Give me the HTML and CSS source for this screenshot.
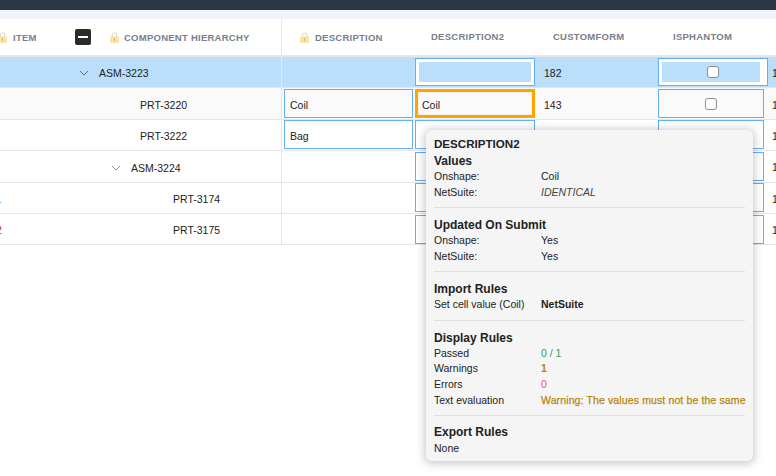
FILE: index.html
```html
<!DOCTYPE html>
<html lang="en">
  <head>
    <meta charset="utf-8">
    <title>Component grid</title>
    <meta name="viewport" content="width=device-width">
    <link rel="stylesheet" href="styles.css">
  </head>
  <body>
    <div class="topbar"></div>
    <div class="strip"></div>

    <div class="grid">
      <!-- header -->
      <div class="row head">
        <div class="cell item">
          <svg class="lock" viewBox="0 0 10 12"><path d="M2.5 6V3.5a2.5 2.5 0 0 1 5 0V6" fill="none" stroke="#dedad0" stroke-width="1.2"/><rect y="4.5" width="10" height="7.5" rx="1" fill="#fde3a7"/><rect x="4.4" y="6.5" width="1.2" height="3.5" fill="#c9b48a"/></svg>
          ITEM
        </div>
        <div class="cell tree">
          <button class="collapse"><span></span></button>
          <svg class="lock" viewBox="0 0 10 12"><path d="M2.5 6V3.5a2.5 2.5 0 0 1 5 0V6" fill="none" stroke="#dedad0" stroke-width="1.2"/><rect y="4.5" width="10" height="7.5" rx="1" fill="#fde3a7"/><rect x="4.4" y="6.5" width="1.2" height="3.5" fill="#c9b48a"/></svg>
          COMPONENT HIERARCHY
        </div>
        <div class="cell desc">
          <svg class="lock" viewBox="0 0 10 12"><path d="M2.5 6V3.5a2.5 2.5 0 0 1 5 0V6" fill="none" stroke="#dedad0" stroke-width="1.2"/><rect y="4.5" width="10" height="7.5" rx="1" fill="#fde3a7"/><rect x="4.4" y="6.5" width="1.2" height="3.5" fill="#c9b48a"/></svg>
          DESCRIPTION
        </div>
        <div class="cell pad-head">DESCRIPTION2</div>
        <div class="cell pad-head">CUSTOMFORM</div>
        <div class="cell pad-head">ISPHANTOM</div>
        <div class="cell"></div>
      </div>

      <div class="row selected">
        <div class="cell item"></div>
        <div class="cell tree level1">
          <svg class="chevron" viewBox="0 0 10 6"><path d="M1 1l4 4 4-4" fill="none" stroke="#5f6b7a" stroke-width="1"/></svg>
          ASM-3223
        </div>
        <div class="cell desc"></div>
        <div class="cell"><div class="field inset"></div></div>
        <div class="cell num">182</div>
        <div class="cell"><div class="field inset wide check"><input type="checkbox"></div></div>
        <div class="cell last">1</div>
      </div>

      <div class="row shaded">
        <div class="cell item"></div>
        <div class="cell tree level2">PRT-3220</div>
        <div class="cell desc"><div class="field">Coil</div></div>
        <div class="cell"><div class="field active">Coil</div></div>
        <div class="cell num">143</div>
        <div class="cell"><div class="field check"><input type="checkbox"></div></div>
        <div class="cell last">1</div>
      </div>

      <div class="row">
        <div class="cell item"></div>
        <div class="cell tree level2">PRT-3222</div>
        <div class="cell desc"><div class="field">Bag</div></div>
        <div class="cell"><div class="field"></div></div>
        <div class="cell num"></div>
        <div class="cell"><div class="field"></div></div>
        <div class="cell last">1</div>
      </div>

      <div class="row">
        <div class="cell item"></div>
        <div class="cell tree level3">
          <svg class="chevron" viewBox="0 0 10 6"><path d="M1 1l4 4 4-4" fill="none" stroke="#9a9a9a" stroke-width="1"/></svg>
          ASM-3224
        </div>
        <div class="cell desc"></div>
        <div class="cell"><div class="field"></div></div>
        <div class="cell num"></div>
        <div class="cell"><div class="field"></div></div>
        <div class="cell last">1</div>
      </div>

      <div class="row">
        <div class="cell item link">1</div>
        <div class="cell tree level4">PRT-3174</div>
        <div class="cell desc"></div>
        <div class="cell"><div class="field"></div></div>
        <div class="cell num"></div>
        <div class="cell"><div class="field"></div></div>
        <div class="cell last">1</div>
      </div>

      <div class="row">
        <div class="cell item bad">2</div>
        <div class="cell tree level4">PRT-3175</div>
        <div class="cell desc"></div>
        <div class="cell"><div class="field"></div></div>
        <div class="cell num"></div>
        <div class="cell"><div class="field"></div></div>
        <div class="cell last">1</div>
      </div>
    </div>

    <!-- popup for the focused cell -->
    <div class="popup">
      <div class="popup-title">DESCRIPTION2</div>
      <h4>Values</h4>
      <div class="line"><span>Onshape:</span><span>Coil</span></div>
      <div class="line"><span>NetSuite:</span><em>IDENTICAL</em></div>
      <hr>
      <h4>Updated On Submit</h4>
      <div class="line"><span>Onshape:</span><span>Yes</span></div>
      <div class="line"><span>NetSuite:</span><span>Yes</span></div>
      <hr>
      <h4>Import Rules</h4>
      <div class="line"><span>Set cell value (Coil)</span><b>NetSuite</b></div>
      <hr>
      <h4>Display Rules</h4>
      <div class="line"><span>Passed</span><span class="green">0 / 1</span></div>
      <div class="line tight"><span>Warnings</span><b class="amber">1</b></div>
      <div class="line tight"><span>Errors</span><span class="red">0</span></div>
      <div class="line tight"><span>Text evaluation</span><span class="amber warning">Warning: The values must not be the same</span></div>
      <hr>
      <h4>Export Rules</h4>
      <div class="line none"><span>None</span></div>
    </div>
  </body>
</html>
```
FILE: styles.css
```css
body {
  margin: 0;
  background-color: #fff;
  font-family: "Liberation Sans", Arial, sans-serif;
  font-size: 10.5px;
  color: #222;
  overflow: hidden;
  height: 476px;
  position: relative;
}

.topbar {
  height: 10px;
  background-color: #2a3644;
}

.strip {
  height: 9px;
  background-color: #f2f4f9;
}

/* table is scrolled a little, so it starts left of the window */
.grid {
  margin-left: -20px;
  width: 840px;
}

.row {
  display: grid;
  grid-template-columns: 95px 207px 132px 124px 120px 106px 56px;
  height: 31.4px;
  box-sizing: border-box;
  border-bottom: 1px solid #e6e6e6;
}

.head {
  height: 38px;
  border-bottom: 2px solid #e6e6e6;
  font-size: 9.5px;
  font-weight: bold;
  letter-spacing: 0.25px;
  color: #77808c;
}

.selected {
  background-color: #bbdefb;
}

.shaded {
  background-color: #fafafa;
}

.cell {
  display: flex;
  align-items: center;
  min-width: 0;
  white-space: nowrap;
}

.item {
  padding-left: 16px;
}

.head .item {
  padding-left: 18px;
  gap: 6px;
}

.tree {
  border-right: 1px solid #e6e6e6;
  padding-top: 2.6px;
}

.head .tree {
  padding-top: 0;
  gap: 5px;
}

.desc {
  padding-left: 1px;
}

.head .desc {
  padding-left: 18px;
  gap: 6px;
}

.pad-head {
  padding-left: 15px;
  padding-bottom: 1px;
}

.head .pad-head:nth-child(4) {
  padding-left: 17px;
}

.level1 { padding-left: 4px; }
.level2 { padding-left: 65px; }
.level3 { padding-left: 36px; }
.level4 { padding-left: 98px; }

.chevron {
  width: 10px;
  height: 6px;
  margin-right: 10px;
}

.lock {
  width: 9px;
  height: 11px;
  flex: none;
}

.collapse {
  width: 16px;
  height: 16px;
  padding: 0;
  margin-right: 14px;
  border: 0;
  border-radius: 2px;
  background-color: #2b2b2b;
  display: flex;
  align-items: center;
  justify-content: center;
}

.collapse span {
  width: 10px;
  height: 2px;
  background-color: #fff;
}

.link { color: #64b5f6; padding-top: 2.6px; }
.bad { color: #c2185b; padding-top: 2.6px; }

.num {
  padding-left: 6px;
  padding-top: 2px;
}

.last {
  padding-left: 8px;
  padding-top: 2px;
}

.field {
  box-sizing: border-box;
  width: calc(100% - 2px);
  height: 29px;
  margin-left: 1px;
  border: 1px solid #64aef5;
  padding: 2px 0 0 5px;
  display: flex;
  align-items: center;
}

.cell:nth-child(4) .field {
  width: 120px;
}

.cell:nth-child(6) .field {
  width: 106px;
  margin-left: 0;
}

.cell:nth-child(6) .wide {
  width: 110px;
  flex: none;
}

.inset {
  height: 28px;
  box-shadow: inset 0 0 0 3px #fff;
}

.wide {
  box-shadow: inset -7px 0 0 #fff, inset 0 0 0 3px #fff;
  padding-right: 4px;
}

.active {
  border: 3px solid #ffa500;
  padding-left: 4px;
  background-color: #fafafa;
  box-shadow: inset 0 0 0 1px #eee;
}

.check {
  justify-content: center;
  padding: 0;
}

.check input {
  appearance: none;
  box-sizing: border-box;
  width: 12px;
  height: 12px;
  margin: 0;
  background-color: #fff;
  border: 1px solid #8f8f8f;
  border-radius: 3px;
}

.popup {
  position: absolute;
  left: 426px;
  top: 130px;
  width: 327px;
  height: 331px;
  box-sizing: border-box;
  padding: 6px 8px 0;
  background-color: #f5f5f5;
  border-radius: 6px;
  box-shadow: 0 1px 8px 2px rgba(0, 0, 0, 0.2);
}

.popup-title {
  font-size: 11.6px;
  font-weight: bold;
  line-height: 16px;
  color: #222;
}

.popup h4 {
  margin: 0 0 -2px;
  font-size: 12px;
  font-weight: bold;
  line-height: 18px;
}

.popup hr {
  margin: 7px 0 8px;
  border: 0;
  border-top: 1px solid #e0e0e0;
}

.popup hr:nth-of-type(3) {
  margin-top: 8px;
}

.popup hr:nth-of-type(4) {
  margin-bottom: 7px;
}

.line {
  display: grid;
  grid-template-columns: 107px auto;
  line-height: 16px;
  white-space: nowrap;
}

.tight {
  line-height: 15.75px;
}

.none {
  padding-top: 1px;
}

.line em {
  font-style: italic;
  color: #444;
}

.green { color: #2e9e5b; }
.amber { color: #b8860b; }
.red { color: #f0506e; }

.warning {
  letter-spacing: 0.125px;
  -webkit-text-stroke: 0.25px #b8860b;
}
```
